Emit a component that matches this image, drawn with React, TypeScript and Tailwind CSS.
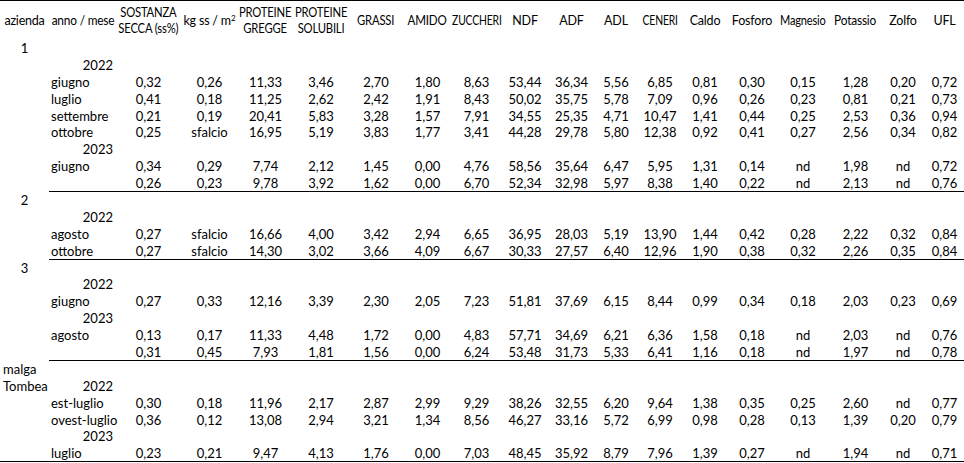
import React from "react";

type Row = {
  az?: string;
  azLeft?: boolean;
  label?: string;
  year?: boolean;
  vals?: string[];
  line?: "part" | "full";
};

const v = (s: string) => s.split(" ");

const rows: Row[] = [
  { az: "1" },
  { label: "2022", year: true },
  { label: "giugno", vals: v("0,32 0,26 11,33 3,46 2,70 1,80 8,63 53,44 36,34 5,56 6,85 0,81 0,30 0,15 1,28 0,20 0,72") },
  { label: "luglio", vals: v("0,41 0,18 11,25 2,62 2,42 1,91 8,43 50,02 35,75 5,78 7,09 0,96 0,26 0,23 0,81 0,21 0,73") },
  { label: "settembre", vals: v("0,21 0,19 20,41 5,83 3,28 1,57 7,91 34,55 25,35 4,71 10,47 1,41 0,44 0,25 2,53 0,36 0,94") },
  { label: "ottobre", vals: v("0,25 sfalcio 16,95 5,19 3,83 1,77 3,41 44,28 29,78 5,80 12,38 0,92 0,41 0,27 2,56 0,34 0,82") },
  { label: "2023", year: true },
  { label: "giugno", vals: v("0,34 0,29 7,74 2,12 1,45 0,00 4,76 58,56 35,64 6,47 5,95 1,31 0,14 nd 1,98 nd 0,72") },
  { label: "", vals: v("0,26 0,23 9,78 3,92 1,62 0,00 6,70 52,34 32,98 5,97 8,38 1,40 0,22 nd 2,13 nd 0,76"), line: "part" },
  { az: "2" },
  { label: "2022", year: true },
  { label: "agosto", vals: v("0,27 sfalcio 16,66 4,00 3,42 2,94 6,65 36,95 28,03 5,19 13,90 1,44 0,42 0,28 2,22 0,32 0,84") },
  { label: "ottobre", vals: v("0,27 sfalcio 14,30 3,02 3,66 4,09 6,67 30,33 27,57 6,40 12,96 1,90 0,38 0,32 2,26 0,35 0,84"), line: "part" },
  { az: "3" },
  { label: "2022", year: true },
  { label: "giugno", vals: v("0,27 0,33 12,16 3,39 2,30 2,05 7,23 51,81 37,69 6,15 8,44 0,99 0,34 0,18 2,03 0,23 0,69") },
  { label: "2023", year: true },
  { label: "agosto", vals: v("0,13 0,17 11,33 4,48 1,72 0,00 4,83 57,71 34,69 6,21 6,36 1,58 0,18 nd 2,03 nd 0,76") },
  { label: "", vals: v("0,31 0,45 7,93 1,81 1,56 0,00 6,24 53,48 31,73 5,33 6,41 1,16 0,18 nd 1,97 nd 0,78"), line: "part" },
  { az: "malga", azLeft: true },
  { az: "Tombea", azLeft: true, label: "2022", year: true },
  { label: "est-luglio", vals: v("0,30 0,18 11,96 2,17 2,87 2,99 9,29 38,26 32,55 6,20 9,64 1,38 0,35 0,25 2,60 nd 0,77") },
  { label: "ovest-luglio", vals: v("0,36 0,12 13,08 2,94 3,21 1,34 8,56 46,27 33,16 5,72 6,99 0,98 0,28 0,13 1,39 0,20 0,79") },
  { label: "2023", year: true },
  { label: "luglio", vals: v("0,23 0,21 9,47 4,13 1,76 0,00 7,03 48,45 35,92 8,79 7,96 1,39 0,27 nd 1,94 nd 0,71"), line: "full" },
];

const grid =
  "grid grid-cols-[49px_67px_65px_57px_55px_56px_54px_49px_49px_48px_45px_44px_44px_46px_48px_54px_51px_44px_39px]";

const headers: { h: React.ReactNode; c: string }[] = [
  { h: <>SOSTANZA<br />SECCA (ss%)</>, c: "scale-x-[0.9]" },
  {
    h: (
      <>
        kg ss / m
        <span className="text-[8px] align-top relative -top-[2px] tracking-normal">2</span>
      </>
    ),
    c: "",
  },
  { h: <>PROTEINE<br />GREGGE</>, c: "scale-x-[0.9]" },
  { h: <>PROTEINE<br />SOLUBILI</>, c: "scale-x-[0.9]" },
  { h: "GRASSI", c: "scale-x-[0.9]" },
  { h: "AMIDO", c: "scale-x-[0.93]" },
  { h: "ZUCCHERI", c: "scale-x-[0.83]" },
  { h: "NDF", c: "" },
  { h: "ADF", c: "" },
  { h: "ADL", c: "" },
  { h: "CENERI", c: "scale-x-[0.83]" },
  { h: "Caldo", c: "" },
  { h: "Fosforo", c: "" },
  { h: "Magnesio", c: "scale-x-[0.88]" },
  { h: "Potassio", c: "scale-x-[0.95]" },
  { h: "Zolfo", c: "" },
  { h: "UFL", c: "" },
];

export default function App() {
  return (
    <div
      className="w-[964px] h-[463px] bg-white text-black overflow-hidden text-[13px]"
      style={{ fontFamily: "Lato, 'Open Sans', sans-serif" }}
    >
      <div
        className={`${grid} h-[40px] border-t border-black items-center leading-[15.5px] text-[12.5px] tracking-[-0.2px]`}
      >
        <div className="text-center whitespace-nowrap">azienda</div>
        <div className="flex justify-center">
          <div className="text-center whitespace-nowrap scale-x-[0.95]">anno / mese</div>
        </div>
        {headers.map((h, i) => (
          <div key={i} className="flex justify-center">
            <div className={`text-center whitespace-nowrap ${h.c}`}>{h.h}</div>
          </div>
        ))}
      </div>
      {rows.map((r, i) => {
        const lineCls =
          r.line === "part" || r.line === "full" ? "border-b border-black" : "";
        return (
          <div key={i} className={`${grid} h-[16.9px] leading-[16px]`}>
            <div
              className={`${r.line === "full" ? lineCls : ""} ${
                r.azLeft ? "text-left pl-[3px]" : "text-center"
              } whitespace-nowrap`}
            >
              {r.az ?? ""}
            </div>
            <div
              className={`${lineCls} whitespace-nowrap ${
                r.year ? "text-right pr-[3px]" : "text-left pl-[2px]"
              }`}
            >
              {r.label ?? ""}
            </div>
            {Array.from({ length: 17 }).map((_, j) => (
              <div key={j} className={`${lineCls} text-center whitespace-nowrap`}>
                {r.vals ? r.vals[j] : ""}
              </div>
            ))}
          </div>
        );
      })}
    </div>
  );
}
